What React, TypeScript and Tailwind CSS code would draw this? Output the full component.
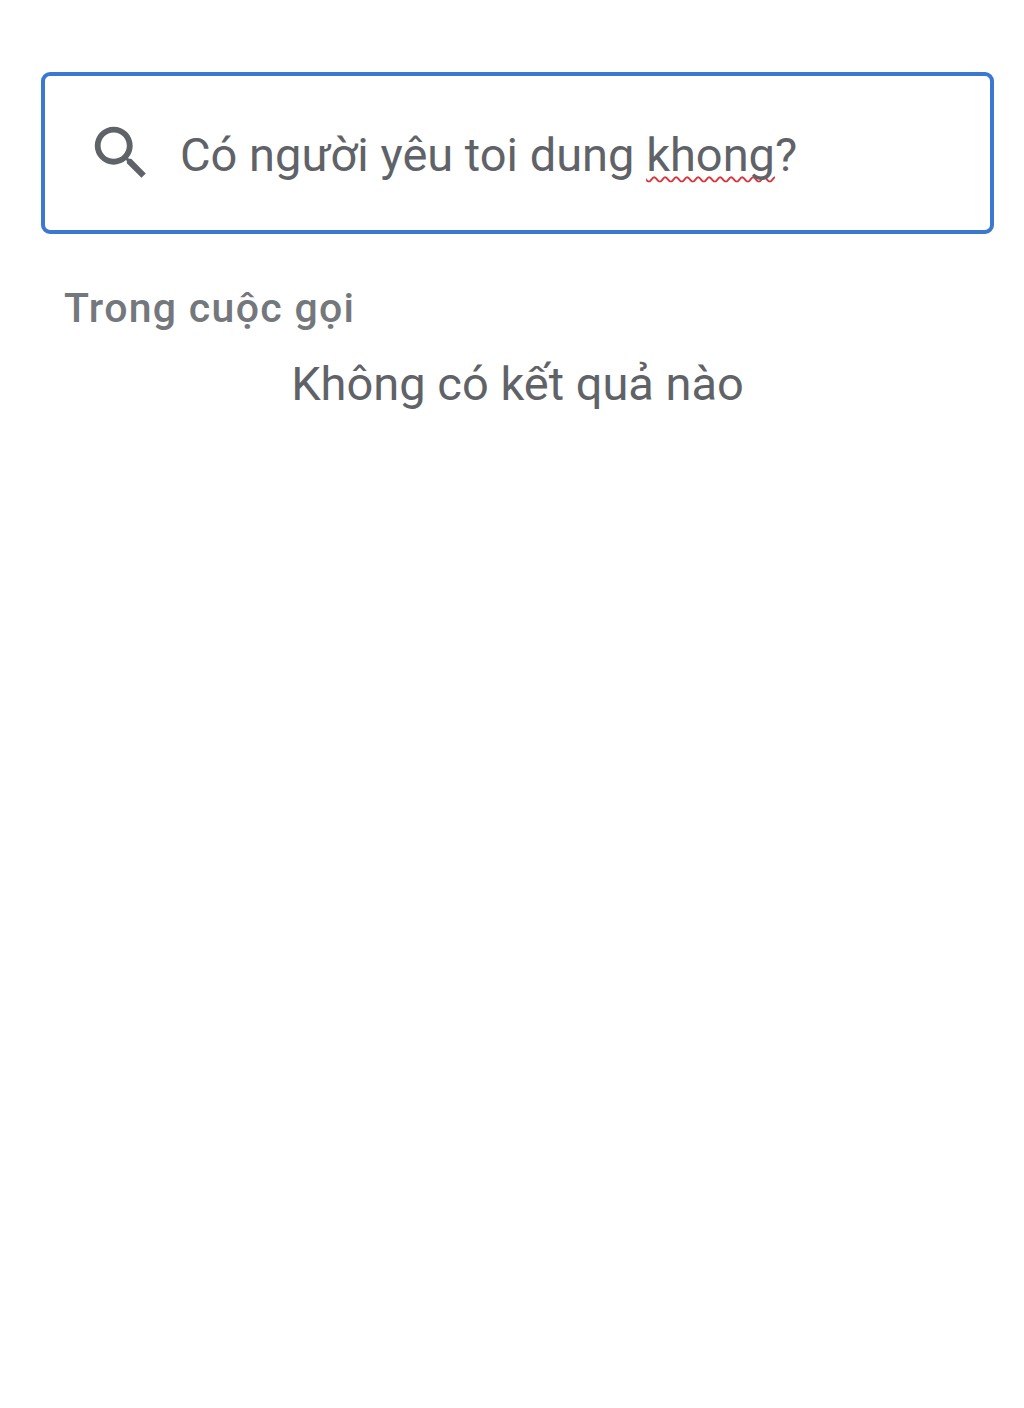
export default function App() {
  return (
    <div className="flex min-h-screen flex-col bg-white px-[41px] pt-[72px] font-['Roboto',sans-serif]">
      <div className="flex h-[162px] w-[953px] items-center rounded-[9px] border-4 border-[#3b78d0] pl-[41px]">
        <svg className="h-[70px] w-[70px] shrink-0" viewBox="0 0 24 24" fill="#5f6368">
          <path d="M15.5 14h-.79l-.28-.27A6.471 6.471 0 0 0 16 9.5 6.5 6.5 0 1 0 9.5 16c1.61 0 3.09-.59 4.23-1.57l.27.28v.79l5 4.99L20.49 19l-4.99-5zm-6 0C7.01 14 5 11.99 5 9.5S7.01 5 9.5 5 14 7.01 14 9.5 11.99 14 9.5 14z" />
        </svg>
        <span className="ml-[24px] mt-[2px] text-[47px] leading-none text-[#5f6368]">
          Có người yêu toi dung{" "}
          <span className="underline decoration-[#d9343a] decoration-wavy decoration-2 underline-offset-[5px] [text-decoration-skip-ink:none]">khong</span>?
        </span>
      </div>
      <h2 className="ml-[23px] mt-[50px] text-[41px] leading-[48px] font-medium tracking-[1.3px] text-[#74777b]">Trong cuộc gọi</h2>
      <p className="mt-[26px] w-[953px] text-center text-[47px] leading-[52px] text-[#5f6368]">Không có kết quả nào</p>
    </div>
  )
}
